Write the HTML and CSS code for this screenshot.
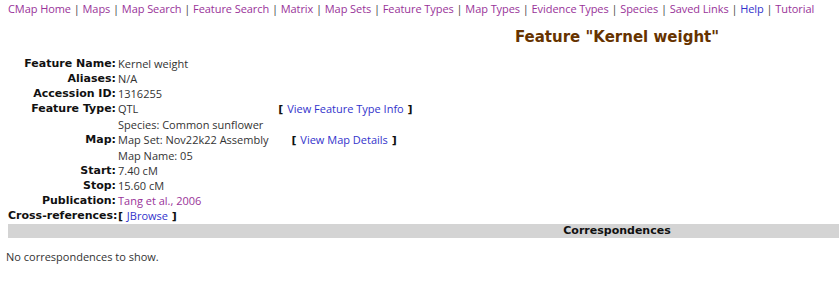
FILE: index.html
```html
<!DOCTYPE html>
<html lang="en">
<head>
  <meta charset="UTF-8">
  <meta name="viewport" content="width=device-width, initial-scale=1.0">
  <title>Feature "Kernel weight"</title>
  <link rel="stylesheet" href="styles.css">
</head>
<body>
  <div class="page">
    <nav class="menu">
      <a href="#" class="seen">CMap Home</a> |
      <a href="#" class="seen">Maps</a> |
      <a href="#" class="seen">Map Search</a> |
      <a href="#" class="seen">Feature Search</a> |
      <a href="#" class="seen">Matrix</a> |
      <a href="#" class="seen">Map Sets</a> |
      <a href="#" class="seen">Feature Types</a> |
      <a href="#" class="seen">Map Types</a> |
      <a href="#" class="seen">Evidence Types</a> |
      <a href="#" class="seen">Species</a> |
      <a href="#" class="seen">Saved Links</a> |
      <a href="#">Help</a> |
      <a href="#" class="seen">Tutorial</a>
    </nav>

    <h1 class="title">Feature "Kernel weight"</h1>

    <div class="details">
      <div class="label">Feature Name:</div>
      <div class="value">Kernel weight</div>

      <div class="label">Aliases:</div>
      <div class="value">N/A</div>

      <div class="label">Accession ID:</div>
      <div class="value">1316255</div>

      <div class="label">Feature Type:</div>
      <div class="value">
        <div class="sub type">
          <span>QTL</span>
          <span class="bracket">[ <a href="#">View Feature Type Info</a> ]</span>
          <span>Species: Common sunflower</span>
        </div>
      </div>

      <div class="label">Map:</div>
      <div class="value">
        <div class="sub map">
          <span>Map Set: Nov22k22 Assembly</span>
          <span class="bracket">[ <a href="#">View Map Details</a> ]</span>
          <span>Map Name: 05</span>
        </div>
      </div>

      <div class="label">Start:</div>
      <div class="value">7.40 cM</div>

      <div class="label">Stop:</div>
      <div class="value">15.60 cM</div>

      <div class="label">Publication:</div>
      <div class="value"><a href="#" class="seen">Tang et al., 2006</a></div>

      <div class="label">Cross-references:</div>
      <div class="value"><span class="bracket">[ <a href="#">JBrowse</a> ]</span></div>
    </div>

    <div class="section-bar">Correspondences</div>
  </div>

  <p class="empty">No correspondences to show.</p>
</body>
</html>
```

FILE: styles.css
```css
html {
  --link: #3333cc;
  --visited: #993399;
  --title: #663300;
  --text: #333;
}

body {
  margin: 0;
  padding: 0 8px;
  font-family: "Open Sans", "DejaVu Sans", sans-serif;
  font-size: 11px;
  color: var(--text);
  background: #fff;
  overflow: hidden;
}

a {
  color: var(--link);
  text-decoration: none;
}

a.seen {
  color: var(--visited);
}

.page {
  width: 1218px;
}

.menu {
  padding-top: 1px;
  font-size: 11px;
  line-height: 16px;
  letter-spacing: -0.07px;
  color: #444;
  white-space: nowrap;
}

.title {
  margin: 11px 0 10px;
  text-align: center;
  font-family: "DejaVu Sans", sans-serif;
  font-size: 15px;
  font-weight: bold;
  color: var(--title);
}

.details {
  display: grid;
  grid-template-columns: 108px auto;
  align-items: start;
  line-height: 15px;
}

.label {
  text-align: right;
  font-family: "DejaVu Sans", sans-serif;
  font-weight: bold;
  color: #111;
  white-space: nowrap;
}

.value {
  padding-left: 2px;
  white-space: nowrap;
}

.sub {
  display: grid;
  grid-template-columns: auto auto;
  justify-content: start;
}

.sub.type {
  column-gap: 15px;
}

.sub.map {
  column-gap: 23px;
}

.bracket {
  font-family: "DejaVu Sans", sans-serif;
  font-weight: bold;
  color: #111;
}

.bracket a {
  font-family: "Open Sans", "DejaVu Sans", sans-serif;
  font-weight: normal;
}

.section-bar {
  margin-top: 0;
  height: 14px;
  line-height: 14px;
  background: #d4d4d4;
  text-align: center;
  font-family: "DejaVu Sans", sans-serif;
  font-weight: bold;
  color: #111;
}

.empty {
  margin: 11px 0 0 -2px;
  font-size: 11px;
}
```
